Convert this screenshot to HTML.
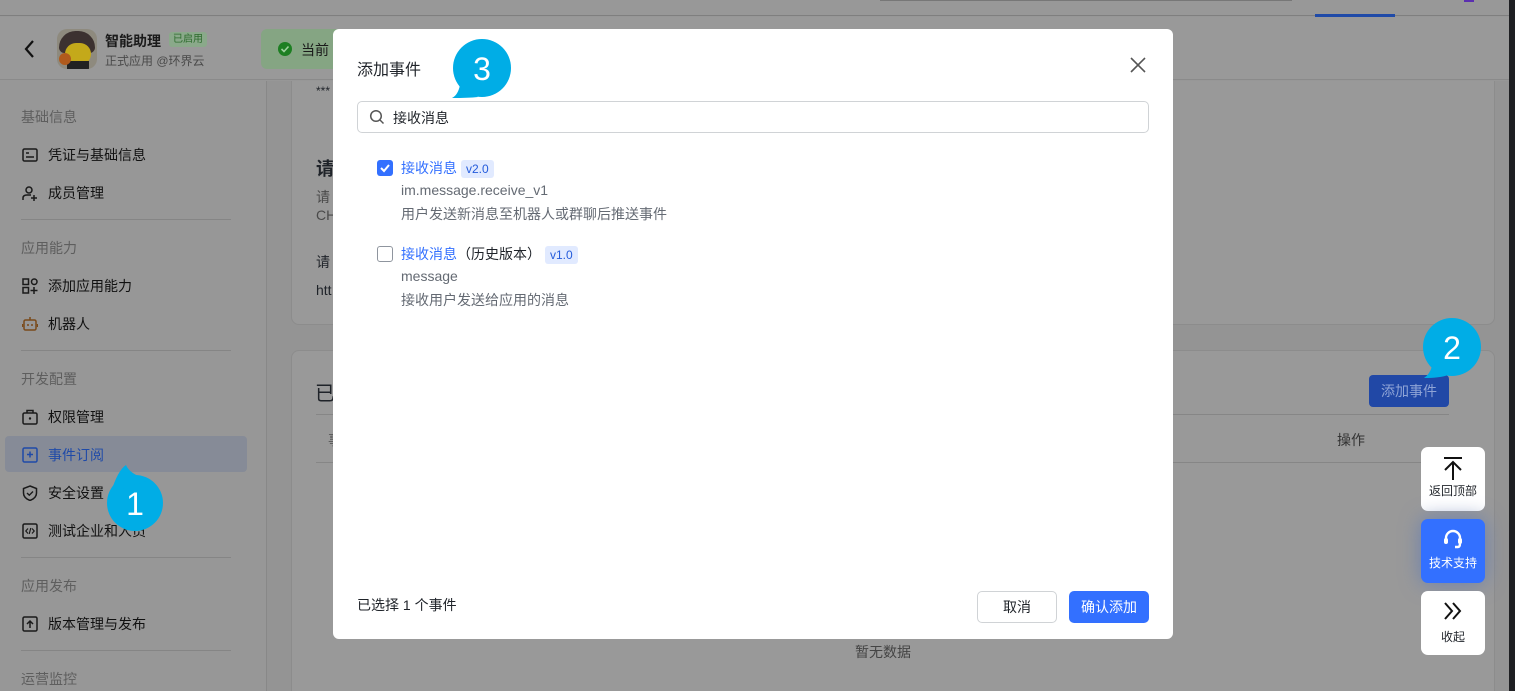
<!DOCTYPE html>
<html style="width:1515px;height:691px;overflow:hidden"><head><meta charset="utf-8">
<style>
*{box-sizing:border-box;margin:0;padding:0}
body{width:1515px;height:691px;overflow:hidden;position:relative;background:#979797;font-family:"Liberation Sans","Noto Sans CJK SC",sans-serif;color:#1f2329}
.abs{position:absolute}
.t{font-size:14px;white-space:nowrap}
.side .sec{position:absolute;left:21px;font-size:14px;color:#5e5e5e}
.side .it{position:absolute;left:22px;font-size:14px;color:#111;display:flex;align-items:center;gap:10px}
.side .hr{position:absolute;left:21px;width:210px;height:1px;background:#858585}
.side svg{display:block}
.modal{position:absolute;left:333px;top:29px;width:840px;height:610px;background:#fff;border-radius:6px}
.chk{position:absolute;width:16px;height:16px;border-radius:3px}
.tag{display:inline-block;background:#e1eaff;color:#245bdb;font-size:12px;padding:1px 5px;border-radius:3px;margin-left:4px;line-height:16px}
.fb{position:absolute;left:1421px;width:64px;height:64px;border-radius:7px;background:#fff;text-align:center;font-size:12px}
</style></head><body>
<div class="abs" style="left:0;top:0;width:1515px;height:16px;background:#989898;border-bottom:1px solid #7f7f7f"></div>
<div class="abs" style="left:880px;top:0;width:412px;height:1px;background:#777"></div>
<div class="abs" style="left:1315px;top:14px;width:80px;height:3px;background:#1f4aa8"></div>
<div class="abs" style="left:1464px;top:0;width:10px;height:2px;background:#5b2fb0"></div>
<div class="abs" style="left:0;top:17px;width:1509px;height:63px;background:#999;border-bottom:1px solid #8a8a8a"></div>
<svg class="abs" style="left:22px;top:38px" width="16" height="22"><path d="M11 3 L4 11 L11 19" stroke="#111" stroke-width="2.2" fill="none"/></svg>
<div class="abs" style="left:57px;top:29px;width:40px;height:40px;border-radius:10px;background:#8e8a7e;overflow:hidden">
<div class="abs" style="left:2px;top:2px;width:36px;height:22px;border-radius:18px 18px 6px 6px;background:#3c3130"></div>
<div class="abs" style="left:8px;top:14px;width:26px;height:22px;border-radius:12px;background:#c4a91a"></div>
<div class="abs" style="left:10px;top:32px;width:22px;height:8px;background:#222"></div>
<div class="abs" style="left:2px;top:24px;width:12px;height:12px;border-radius:50%;background:#b05a1c"></div>
</div>
<div class="abs t" style="left:105px;top:31px;font-size:14px;font-weight:bold;color:#1a1a1a">智能助理</div>
<div class="abs" style="left:169px;top:32px;font-size:10px;background:#8aa98a;color:#2d6b2d;padding:0 4px;border-radius:3px;line-height:15px">已启用</div>
<div class="abs t" style="left:105px;top:52px;font-size:12px;color:#4a4a4a">正式应用 @环界云</div>
<div class="abs" style="left:261px;top:29px;width:90px;height:40px;background:#85a583;border-radius:6px"></div>
<svg class="abs" style="left:277px;top:41px" width="16" height="16"><circle cx="8" cy="8" r="7" fill="#1d7f22"/><path d="M4.5 8L7 10.5L11.5 5.5" stroke="#9fd09f" stroke-width="1.6" fill="none"/></svg>
<div class="abs t" style="left:301px;top:40px;color:#1a1a1a">当前</div>
<div class="side">
<div class="abs" style="left:266px;top:81px;width:1px;height:610px;background:#888"></div>
<div class="sec" style="top:107px">基础信息</div>
<div class="it" style="top:145px"><svg width="16" height="16"><rect x="1" y="2" width="14" height="12" rx="1.5" stroke="#1a1a1a" stroke-width="1.5" fill="none"/><path d="M4 6H7M4 10H12" stroke="#1a1a1a" stroke-width="1.4"/></svg>凭证与基础信息</div>
<div class="it" style="top:183px"><svg width="16" height="16"><circle cx="7" cy="5" r="3" stroke="#1a1a1a" stroke-width="1.5" fill="none"/><path d="M1 15V13Q1 10 5 10H9M12 10V16M9 13H15" stroke="#1a1a1a" stroke-width="1.5" fill="none"/></svg>成员管理</div>
<div class="hr" style="top:219px"></div>
<div class="sec" style="top:238px">应用能力</div>
<div class="it" style="top:276px"><svg width="16" height="16"><rect x="1" y="1" width="5.5" height="5.5" stroke="#1a1a1a" stroke-width="1.5" fill="none"/><rect x="9.5" y="1" width="5.5" height="5.5" rx="2.7" stroke="#1a1a1a" stroke-width="1.5" fill="none"/><rect x="1" y="9.5" width="5.5" height="5.5" stroke="#1a1a1a" stroke-width="1.5" fill="none"/><path d="M12 9V16M8.5 12.5H15.5" stroke="#1a1a1a" stroke-width="1.5"/></svg>添加应用能力</div>
<div class="it" style="top:314px"><svg width="16" height="16"><rect x="2" y="4" width="12" height="10" rx="1.5" stroke="#7a4a1a" stroke-width="1.5" fill="none"/><path d="M8 1V4M0.5 8V11M15.5 8V11" stroke="#7a4a1a" stroke-width="1.5"/><circle cx="6" cy="9" r="1" fill="#7a4a1a"/><circle cx="10" cy="9" r="1" fill="#7a4a1a"/></svg>机器人</div>
<div class="hr" style="top:350px"></div>
<div class="sec" style="top:369px">开发配置</div>
<div class="it" style="top:407px"><svg width="16" height="16"><rect x="1" y="4" width="14" height="11" rx="1.5" stroke="#1a1a1a" stroke-width="1.5" fill="none"/><path d="M5 4V1.5H11V4" stroke="#1a1a1a" stroke-width="1.5" fill="none"/><circle cx="8" cy="9.5" r="1.2" fill="#1a1a1a"/></svg>权限管理</div>
<div class="abs" style="left:5px;top:436px;width:242px;height:36px;background:#868b97;border-radius:4px"></div>
<div class="it" style="top:445px;color:#1f4aa8"><svg width="16" height="16"><rect x="1" y="1" width="14" height="14" rx="1.5" stroke="#1f4aa8" stroke-width="1.5" fill="none"/><path d="M8 4.5V10.5M5 7.5H11" stroke="#1f4aa8" stroke-width="1.5"/></svg>事件订阅</div>
<div class="it" style="top:483px"><svg width="16" height="16"><path d="M8 1L14.5 3.5V8Q14.5 13 8 15.5Q1.5 13 1.5 8V3.5Z" stroke="#1a1a1a" stroke-width="1.5" fill="none"/><path d="M5 8L7.3 10.2L11 6.5" stroke="#1a1a1a" stroke-width="1.4" fill="none"/></svg>安全设置</div>
<div class="it" style="top:521px"><svg width="16" height="16"><rect x="1" y="1" width="14" height="14" rx="1.5" stroke="#1a1a1a" stroke-width="1.5" fill="none"/><path d="M6 5.5L3.8 8L6 10.5M10 5.5L12.2 8L10 10.5M8.8 5L7.2 11" stroke="#1a1a1a" stroke-width="1.2" fill="none"/></svg>测试企业和人员</div>
<div class="hr" style="top:557px"></div>
<div class="sec" style="top:576px">应用发布</div>
<div class="it" style="top:614px"><svg width="16" height="16"><rect x="1" y="1" width="14" height="14" rx="1.5" stroke="#1a1a1a" stroke-width="1.5" fill="none"/><path d="M8 12V5M5 8L8 5L11 8" stroke="#1a1a1a" stroke-width="1.5" fill="none"/></svg>版本管理与发布</div>
<div class="hr" style="top:650px"></div>
<div class="sec" style="top:669px">运营监控</div>
</div>
<div class="abs" style="left:267px;top:81px;width:1242px;height:610px;background:#949494"></div>
<div class="abs" style="left:291px;top:81px;width:1204px;height:244px;background:#999;border:1px solid #8c8c8c;border-top:none;border-radius:0 0 8px 8px"></div>
<div class="abs" style="left:291px;top:350px;width:1204px;height:341px;background:#999;border:1px solid #8c8c8c;border-bottom:none;border-radius:8px 8px 0 0"></div>
<div class="abs t" style="left:316px;top:84px;font-size:12px">***</div>
<div class="abs t" style="left:316px;top:155px;font-size:18px;font-weight:bold">请</div>
<div class="abs t" style="left:316px;top:187px;color:#4a4a4a">请</div>
<div class="abs t" style="left:316px;top:207px;color:#4a4a4a">CH</div>
<div class="abs t" style="left:316px;top:252px">请</div>
<div class="abs t" style="left:316px;top:282px">htt</div>
<div class="abs t" style="left:315px;top:377px;font-size:20px">已</div>
<div class="abs" style="left:316px;top:414px;width:1133px;height:1px;background:#868686"></div>
<div class="abs" style="left:316px;top:462px;width:1133px;height:1px;background:#868686"></div>
<div class="abs t" style="left:328px;top:430px;color:#555">事</div>
<div class="abs t" style="left:1337px;top:430px;color:#333">操作</div>
<div class="abs t" style="left:855px;top:642px;color:#444">暂无数据</div>
<div class="abs" style="left:1369px;top:375px;width:80px;height:32px;background:#2148a6;border-radius:4px;color:#8fa4d6;font-size:14px;text-align:center;line-height:32px">添加事件</div>
<div class="abs" style="left:1509px;top:0;width:6px;height:691px;background:#1e1f22"></div>
<div class="fb" style="top:447px"><svg width="24" height="26" style="margin-top:8px"><path d="M3 3H21M12 7V25M4 15L12 7L20 15" stroke="#111" stroke-width="2" fill="none"/></svg><div style="margin-top:-2px">返回顶部</div></div>
<div class="fb" style="top:519px;background:#3370ff;color:#fff;box-shadow:0 0 20px #6a7fb0"><svg width="24" height="24" style="margin-top:8px"><path d="M5 14V11A7 7 0 0 1 19 11V14M14 20H17Q19 20 19 16" stroke="#fff" stroke-width="2.4" fill="none"/><rect x="3" y="11" width="4" height="6" rx="2" fill="#fff"/><rect x="17" y="11" width="4" height="6" rx="2" fill="#fff"/></svg><div>技术支持</div></div>
<div class="fb" style="top:591px"><svg width="24" height="24" style="margin-top:8px"><path d="M4 4L11 12L4 20M12 4L19 12L12 20" stroke="#111" stroke-width="2" fill="none"/></svg><div style="margin-top:2px">收起</div></div>
<div class="modal">
<div class="abs t" style="left:24px;top:27px;font-size:16px;color:#1f2329">添加事件</div>
<svg class="abs" style="left:796px;top:27px" width="18" height="18"><path d="M2 2L16 16M16 2L2 16" stroke="#555" stroke-width="1.6"/></svg>
<div class="abs" style="left:24px;top:72px;width:792px;height:32px;border:1px solid #d0d3d6;border-radius:5px"></div>
<svg class="abs" style="left:36px;top:80px" width="16" height="16"><circle cx="7" cy="7" r="5.3" stroke="#555" stroke-width="1.5" fill="none"/><path d="M11 11L14.5 14.5" stroke="#555" stroke-width="1.5"/></svg>
<div class="abs t" style="left:60px;top:79px;color:#1f2329">接收消息</div>
<div class="chk" style="left:44px;top:131px;background:#3370ff"><svg width="16" height="16"><path d="M4 8L7 11L12 5" stroke="#fff" stroke-width="2" fill="none"/></svg></div>
<div class="abs t" style="left:68px;top:129px;color:#3370ff">接收消息<span class="tag">v2.0</span></div>
<div class="abs t" style="left:68px;top:153px;color:#646a73">im.message.receive_v1</div>
<div class="abs t" style="left:68px;top:175px;color:#646a73">用户发送新消息至机器人或群聊后推送事件</div>
<div class="chk" style="left:44px;top:217px;border:1.5px solid #8f959e"></div>
<div class="abs t" style="left:68px;top:215px;color:#3370ff">接收消息<span style="color:#1f2329">（历史版本）</span><span class="tag">v1.0</span></div>
<div class="abs t" style="left:68px;top:239px;color:#646a73">message</div>
<div class="abs t" style="left:68px;top:261px;color:#646a73">接收用户发送给应用的消息</div>
<div class="abs t" style="left:24px;top:566px;color:#1f2329">已选择 1 个事件</div>
<div class="abs" style="left:644px;top:562px;width:80px;height:32px;border:1px solid #d0d3d6;border-radius:5px;font-size:14px;text-align:center;line-height:30px">取消</div>
<div class="abs" style="left:736px;top:562px;width:80px;height:32px;background:#3370ff;color:#fff;border-radius:5px;font-size:14px;text-align:center;line-height:32px">确认添加</div>
</div>
<svg class="abs" style="left:0;top:0" width="1515" height="691">
<g fill="#00ade6">
<circle cx="482" cy="68" r="29"/><path d="M460 85 Q458 95 452 98 Q468 98 478 97 Z"/>
<circle cx="1452" cy="347" r="29"/><path d="M1432 366 Q1430 374 1424 378 Q1440 378 1448 375 Z"/>
<circle cx="135" cy="503" r="28"/><path d="M111 492 Q118 470 126 465 Q130 475 150 480 Z"/>
</g>
<g fill="#fff" font-family="Liberation Sans, sans-serif" font-size="32" text-anchor="middle">
<text x="482" y="80">3</text><text x="1452" y="359">2</text><text x="135" y="515">1</text>
</g>
</svg>
</body></html>
